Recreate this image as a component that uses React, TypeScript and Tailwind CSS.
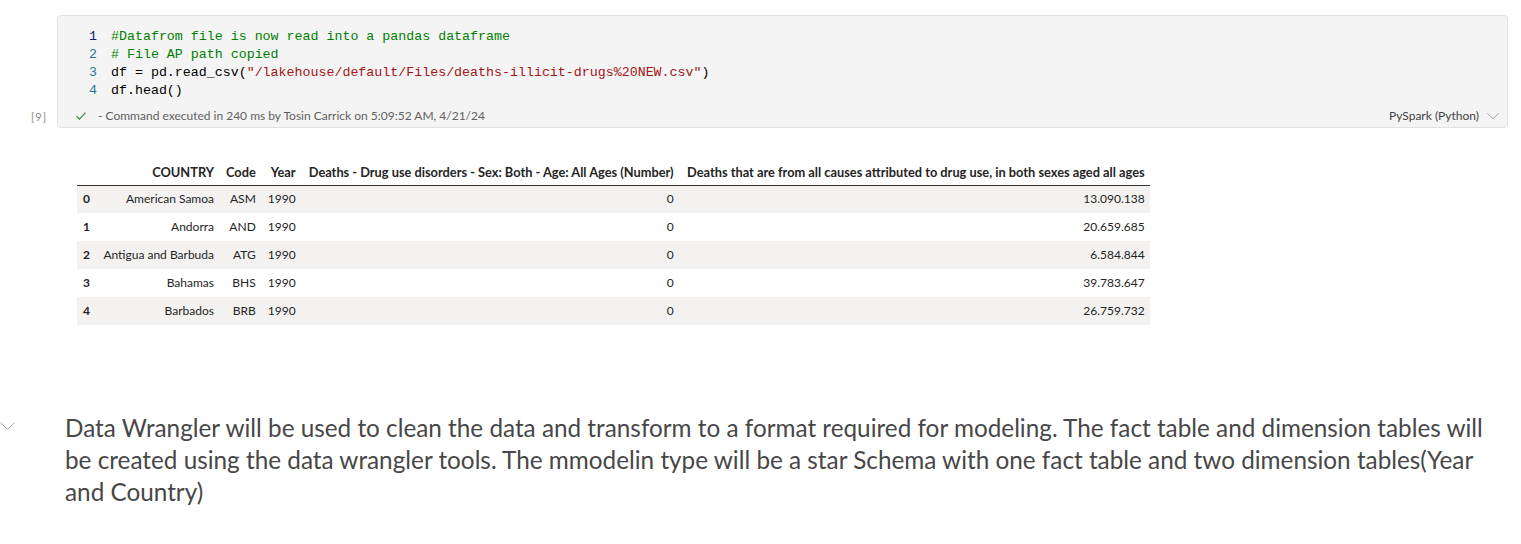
const rows = [
  { i: "0", country: "American Samoa", code: "ASM", year: "1990", a: "0", b: "13.090.138" },
  { i: "1", country: "Andorra", code: "AND", year: "1990", a: "0", b: "20.659.685" },
  { i: "2", country: "Antigua and Barbuda", code: "ATG", year: "1990", a: "0", b: "6.584.844" },
  { i: "3", country: "Bahamas", code: "BHS", year: "1990", a: "0", b: "39.783.647" },
  { i: "4", country: "Barbados", code: "BRB", year: "1990", a: "0", b: "26.759.732" },
];

function Chevron({ className }: { className?: string }) {
  return (
    <svg viewBox="0 0 16 8" className={className} fill="none" stroke="currentColor" strokeWidth="1">
      <polyline points="0.5,0.5 8,7.5 15.5,0.5" />
    </svg>
  );
}

export default function App() {
  return (
    <div className="min-h-screen bg-white pt-[15px] text-[#242424]" style={{ fontFamily: "'Segoe UI', Lato, sans-serif" }}>
      {/* code cell */}
      <div className="flex pr-[13px]">
        <div className="flex w-[57px] shrink-0 items-end pb-[3px] pl-[31px] text-[11px] text-[#8a8a8a] tracking-[1px]">[9]</div>
        <div className="flex-1 rounded-[4px] border border-[#e1e1e1] bg-[#f4f4f4]">
          <div className="pt-[12px] text-[13.3px] leading-[18px]" style={{ fontFamily: "'Liberation Mono', monospace" }}>
            {[
              <span className="text-[#008000]">#Datafrom file is now read into a pandas dataframe</span>,
              <span className="text-[#008000]"># File AP path copied</span>,
              <span className="text-black">
                df = pd.read_csv(<span className="text-[#a31515]">"/lakehouse/default/Files/deaths-illicit-drugs%20NEW.csv"</span>)
              </span>,
              <span className="text-black">df.head()</span>,
            ].map((line, n) => (
              <div key={n} className="flex whitespace-pre">
                <div className={`w-[40px] shrink-0 pr-[1px] text-right ${n === 0 ? "text-[#0b216f]" : "text-[#237893]"}`}>{n + 1}</div>
                <div className="pl-[13px]">{line}</div>
              </div>
            ))}
          </div>
          <div className="mt-[5px] flex h-[22px] items-center pl-[18px] pr-[8px] text-[12px] text-[#616161]">
            <svg viewBox="0 0 10 8" className="h-[8px] w-[10px] text-[#2b8a3e]" fill="none" stroke="currentColor" strokeWidth="1.1">
              <polyline points="0.5,4.2 3.4,7.2 9.5,0.6" />
            </svg>
            <span className="ml-[12px]">- Command executed in 240 ms by Tosin Carrick on 5:09:52 AM, 4/21/24</span>
            <span className="ml-auto text-[#424242]">PySpark (Python)</span>
            <Chevron className="ml-[8px] h-[6px] w-[12px] text-[#8a8a8a]" />
          </div>
        </div>
      </div>

      {/* output table */}
      <div className="pl-[77px] pt-[32px]">
        <table className="table-fixed border-collapse text-[12px] text-[#242424]">
          <colgroup>
            <col className="w-[19px]" />
            <col className="w-[124px]" />
            <col className="w-[41px]" />
            <col className="w-[38px]" />
            <col className="w-[378px]" />
            <col className="w-[470px]" />
          </colgroup>
          <thead>
            <tr className="h-[25px] border-b border-[#333333] text-[12.8px] font-bold whitespace-nowrap">
              <th />
              <th className="px-[6px] text-right">COUNTRY</th>
              <th className="px-[6px] text-right">Code</th>
              <th className="px-[6px] text-right">Year</th>
              <th className="px-[6px] text-right">Deaths - Drug use disorders - Sex: Both - Age: All Ages (Number)</th>
              <th className="pl-[6px] pr-[5px] text-right">Deaths that are from all causes attributed to drug use, in both sexes aged all ages</th>
            </tr>
          </thead>
          <tbody>
            {rows.map((r, n) => (
              <tr key={r.i} className={`h-[28px] whitespace-nowrap ${n % 2 === 0 ? "bg-[#f3f2f1]" : "bg-white"}`}>
                <td className="pl-[6px] text-left font-bold">{r.i}</td>
                <td className="px-[6px] text-right">{r.country}</td>
                <td className="px-[6px] text-right">{r.code}</td>
                <td className="px-[6px] text-right">{r.year}</td>
                <td className="px-[6px] text-right">{r.a}</td>
                <td className="pl-[6px] pr-[5px] text-right">{r.b}</td>
              </tr>
            ))}
          </tbody>
        </table>
      </div>

      {/* markdown cell */}
      <div className="mt-[84px] flex">
        <div className="w-[65px] shrink-0 pt-[13px]">
          <Chevron className="h-[8px] w-[15px] text-[#9a9a9a]" />
        </div>
        <p className="w-[1430px] pt-[3px] text-[24.3px] font-normal leading-[32px] text-[#474747]">
          Data Wrangler will be used to clean the data and transform to a format required for modeling. The fact table and dimension tables will be created using the data wrangler tools. The mmodelin type will be a star Schema with one fact table and two dimension tables(Year and Country)
        </p>
      </div>
    </div>
  );
}
